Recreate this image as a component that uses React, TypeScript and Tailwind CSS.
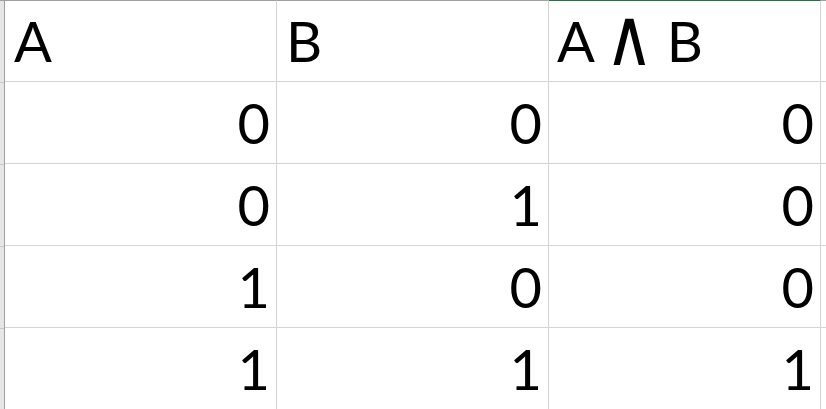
import React from 'react';

const rows: [number, number, number][] = [
  [0, 0, 0],
  [0, 1, 0],
  [1, 0, 0],
  [1, 1, 1],
];

const cell = 'w-[272px] shrink-0 h-full flex items-end border-r border-[#d4d4d4] pb-[12px]';

const App: React.FC = () => {
  return (
    <div
      className="w-[826px] h-[409px] overflow-hidden bg-white flex text-black text-[56px] leading-none"
      style={{ fontFamily: 'Lato, "Open Sans", sans-serif' }}
    >
      {/* row header strip */}
      <div className="w-[5px] shrink-0 h-full flex flex-col bg-[#e6e6e6] border-r border-[#9f9f9f] border-t border-t-[#9f9f9f]">
        {[0, 1, 2, 3, 4].map((i) => (
          <div key={i} className="h-[82px] shrink-0 border-b border-[#c8c8c8]" />
        ))}
      </div>

      <div className="flex-1 flex flex-col">
        {/* header row */}
        <div className="h-[82px] shrink-0 flex border-b border-[#d4d4d4]">
          <div className={`${cell} pl-[9px] border-t border-t-[#9f9f9f]`}>A</div>
          <div className={`${cell} pl-[9px] border-t border-t-[#9f9f9f]`}>B</div>
          <div className={`${cell} pl-[8px] border-t border-t-[#217346] whitespace-pre`}>
            A <span className="inline-block leading-none origin-bottom translate-y-[6px] scale-x-[1.18] scale-y-[1.42] mx-[2px]">∧</span> B
          </div>
          <div className="flex-1 border-t border-t-[#9f9f9f]" />
        </div>

        {rows.map((r, i) => (
          <div key={i} className="h-[82px] shrink-0 flex border-b border-[#d4d4d4]">
            {r.map((v, j) => (
              <div key={j} className={`${cell} justify-end pr-[6px]`}>
                {v}
              </div>
            ))}
            <div className="flex-1" />
          </div>
        ))}
      </div>
    </div>
  );
};

export default App;
